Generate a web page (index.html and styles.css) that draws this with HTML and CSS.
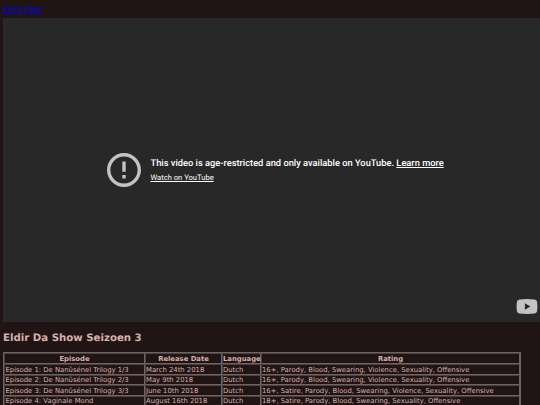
FILE: index.html
```
<!DOCTYPE html>
<html lang="en">
<head>
    <meta charset="UTF-8">
    <title>Eldir Da Show Seizoen 3</title>
    <link rel="stylesheet" href="styles.css">
</head>
<body>
    <a href="index.html" class="home-link">Home Page</a>
    <div class="video">
        <div class="video-error">
            <svg class="error-icon" viewBox="2 2 20 20"><path d="M11 15h2v2h-2zm0-8h2v6h-2zm.99-5C6.47 2 2 6.48 2 12s4.47 10 9.99 10C17.52 22 22 17.52 22 12S17.52 2 11.99 2zM12 20c-4.42 0-8-3.58-8-8s3.58-8 8-8 8 3.58 8 8-3.58 8-8 8z"/></svg>
            <div class="error-text">
                <div class="reason">This video is age-restricted and only available on YouTube. <a href="#">Learn more</a></div>
                <a href="#" class="watch">Watch on YouTube</a>
            </div>
        </div>
        <svg class="yt-logo" viewBox="0 0 21 15"><path fill-rule="evenodd" d="M3 .4Q10.500 -.4 18 .4Q20.300 .6 20.600 3Q21.300 7.500 20.600 12Q20.300 14.400 18 14.600Q10.500 15.400 3 14.600Q.7 14.400 .4 12Q-.3 7.500 .4 3Q.7 .6 3 .4ZM8.400 4.300V10.700L13.900 7.500Z"/></svg>
    </div>
    <h1>Eldir Da Show Seizoen 3</h1>
    <table class="episodes">
        <tr>
            <th class="col-episode">Episode</th>
            <th class="col-date">Release Date</th>
            <th class="col-language">Language</th>
            <th>Rating</th>
        </tr>
        <tr>
            <td>Episode 1: De Nanûsénel Trilogy 1/3</td>
            <td>March 24th 2018</td>
            <td>Dutch</td>
            <td>16+, Parody, Blood, Swearing, Violence, Sexuality, Offensive</td>
        </tr>
        <tr>
            <td>Episode 2: De Nanûsénel Trilogy 2/3</td>
            <td>May 9th 2018</td>
            <td>Dutch</td>
            <td>16+, Parody, Blood, Swearing, Violence, Sexuality, Offensive</td>
        </tr>
        <tr>
            <td>Episode 3: De Nanûsénel Trilogy 3/3</td>
            <td>June 10th 2018</td>
            <td>Dutch</td>
            <td>16+, Satire, Parody, Blood, Swearing, Violence, Sexuality, Offensive</td>
        </tr>
        <tr>
            <td>Episode 4: Vaginale Mond</td>
            <td>August 16th 2018</td>
            <td>Dutch</td>
            <td>18+, Satire, Parody, Blood, Swearing, Sexuality, Offensive</td>
        </tr>
    </table>
</body>
</html>
```
FILE: styles.css
```
html {
    overflow: hidden;
}

body {
    height: 405px;
    margin: 0;
    padding: 3px 0 0 3px;
    box-sizing: border-box;
    overflow: hidden;
    background-color: #201414;
    color: #d8b0ac;
    font-family: Verdana, "DejaVu Sans", sans-serif;
    font-size: 6.84px;
    text-rendering: geometricPrecision;
}

.home-link {
    display: block;
    height: 15px;
    line-height: 12px;
    color: #0000ee;
}

.video {
    display: flex;
    flex-direction: column;
    align-items: center;
    height: 304px;
    box-sizing: border-box;
    padding-top: 135px;
    background-color: #282828;
    font-family: Roboto, sans-serif;
}

.video-error {
    display: flex;
    align-items: flex-start;
    width: 330px;
    flex: 1;
}

.error-icon {
    width: 34px;
    height: 34px;
    flex: none;
    fill: #c3c3c3;
}

.error-text {
    margin: 1px 0 0 10px;
    color: #fff;
    white-space: nowrap;
}

.error-text a {
    color: inherit;
}

.reason {
    font-size: 9.3px;
    font-weight: 500;
    line-height: 19px;
}

.watch {
    display: block;
    font-size: 7.6px;
    line-height: 10px;
}

.yt-logo {
    width: 22px;
    height: 15px;
    margin: 0 2px 8px 0;
    align-self: flex-end;
    fill: #c3c3c3;
}

h1 {
    margin: 10px 0 7px;
    font-size: 10.2px;
    line-height: 13px;
}

.episodes {
    width: 518px;
    table-layout: fixed;
    border-collapse: separate;
    border-spacing: 0;
    border: 1px solid #6e6462;
}

.episodes th,
.episodes td {
    height: 11px;
    padding: 0;
    box-sizing: border-box;
    border: 1px solid;
    border-color: #4c4241 #6e6462 #6e6462 #4c4241;
    line-height: 8px;
    text-align: left;
    white-space: nowrap;
}

.episodes td:first-child {
    padding-left: 0.5px;
}

.episodes tr:nth-child(odd) td {
    height: 10px;
}

.episodes th {
    text-align: center;
}

.episodes .col-episode {
    width: 141px;
}

.episodes .col-date {
    width: 77px;
}

.episodes .col-language {
    width: 39px;
}
```
